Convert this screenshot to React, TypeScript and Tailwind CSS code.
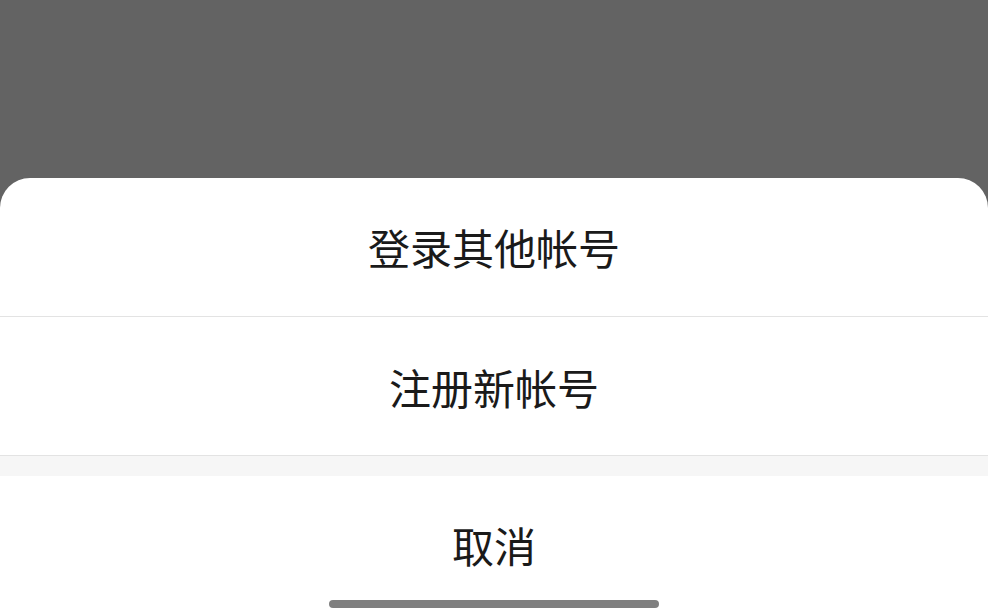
export default function App() {
    const font = { fontFamily: '"Noto Sans CJK SC", "Noto Sans", sans-serif' };

    return <div className="flex flex-col w-full h-[614px] bg-[#636363] overflow-hidden" style={font}>
        <div className="h-[178px] shrink-0" />
        <div className="flex flex-col flex-1 bg-white rounded-t-[30px] relative">
            <button className="h-[139px] flex items-center justify-center text-[42px] text-[#1a1a1a] border-b border-[#e3e3e3] pb-[2px]">
                登录其他帐号
            </button>
            <button className="h-[139px] flex items-center justify-center text-[42px] text-[#1a1a1a] border-b border-[#e3e3e3]">
                注册新帐号
            </button>
            <div className="h-[20px] bg-[#f6f6f6]" />
            <button className="h-[138px] flex items-center justify-center text-[42px] text-[#1a1a1a] pb-[2px]">
                取消
            </button>
            <div className="absolute bottom-[6px] left-1/2 -translate-x-1/2 w-[330px] h-[8px] rounded-full bg-[#7f7f7f]" />
        </div>
    </div>
}
